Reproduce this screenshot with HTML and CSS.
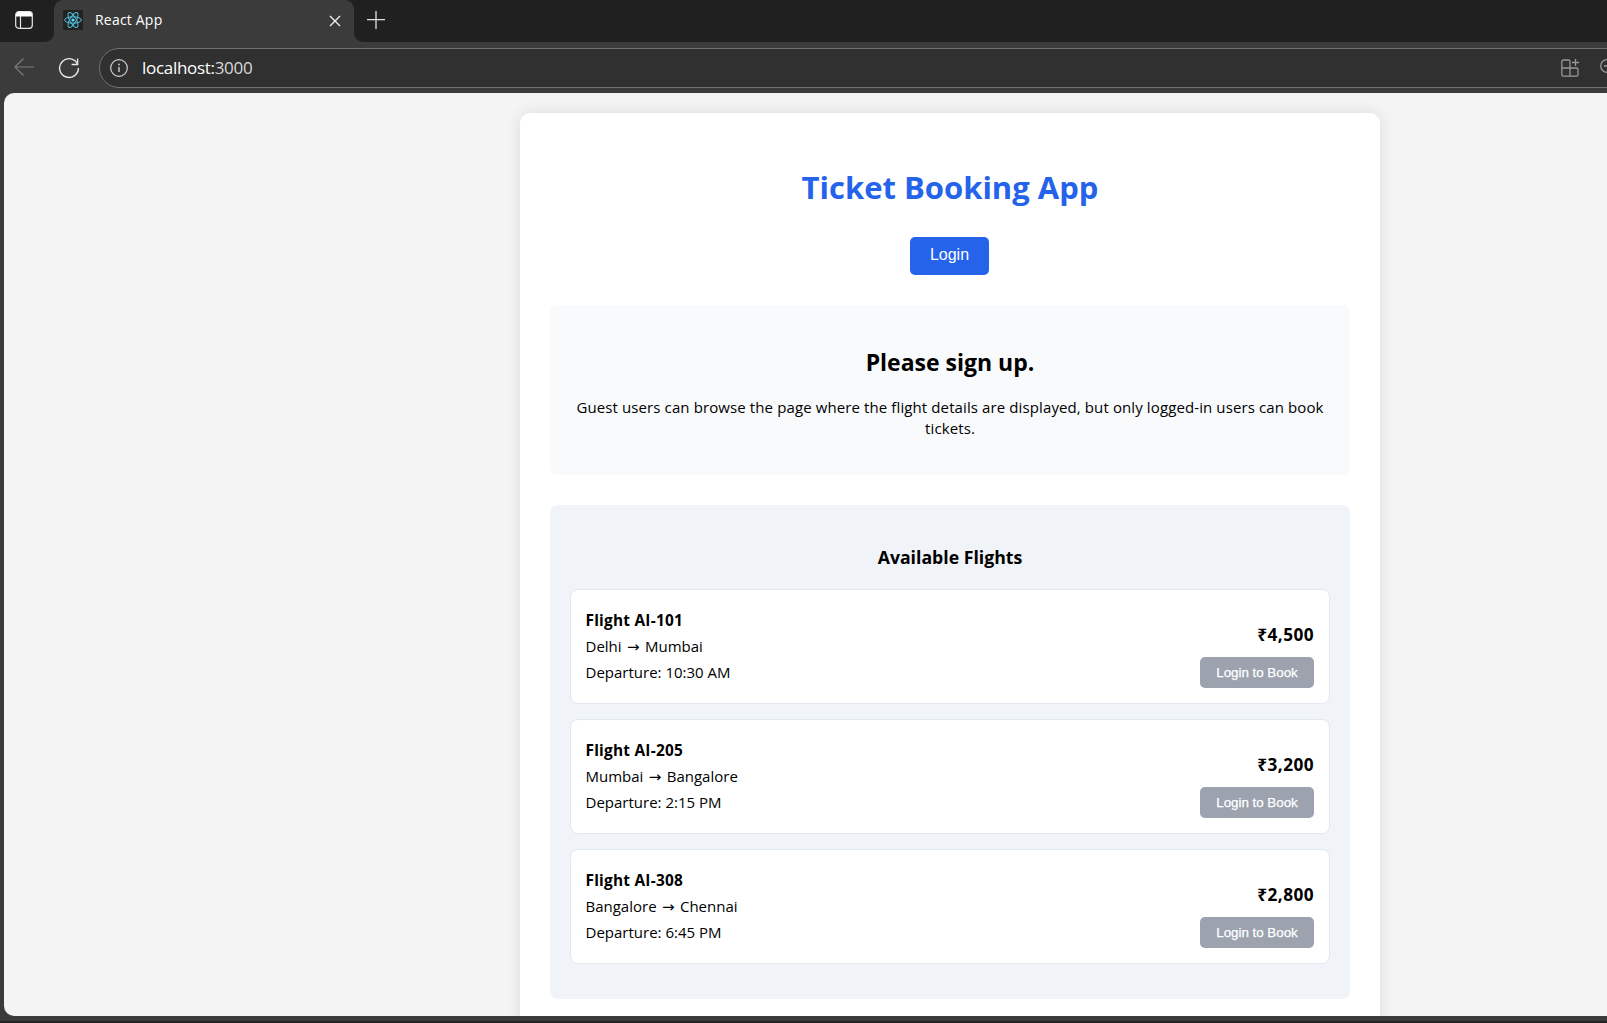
FILE: index.html
```html
<!DOCTYPE html>
<html lang="en">
<head>
<meta charset="utf-8">
<title>React App</title>
<link rel="stylesheet" href="styles.css">
</head>
<body>
<div class="browser">
  <div class="tabstrip">
    <div class="tab-actions">
      <svg width="18" height="18" viewBox="0 0 18 18" fill="none" stroke="#e6e6e6" stroke-width="1.2"><rect x=".7" y=".7" width="16.6" height="16.6" rx="3"/><path d="M1 3.500Q1 1 3.500 1h11Q17 1 17 3.500v2H1z" fill="#fff" stroke="none"/><path d="M5.5 5v12"/></svg>
    </div>
    <div class="tab">
      <svg class="favicon" width="20" height="20" viewBox="0 0 20 20" fill="none" stroke="#53c1de" stroke-width="1"><rect width="20" height="20" rx="1.5" fill="#222" stroke="none"/><ellipse cx="10" cy="10" rx="8.4" ry="3.2"/><ellipse cx="10" cy="10" rx="8.4" ry="3.2" transform="rotate(60 10 10)"/><ellipse cx="10" cy="10" rx="8.4" ry="3.2" transform="rotate(120 10 10)"/><circle cx="10" cy="10" r="1.6" fill="#61dafb" stroke="none"/></svg>
      <span class="tab-title">React App</span>
      <svg class="tab-close" width="12" height="12" viewBox="0 0 12 12" stroke="#f0f0f0" stroke-width="1.4"><path d="M1 1l10 10M11 1L1 11"/></svg>
    </div>
    <div class="strip-rest">
      <svg width="18" height="18" viewBox="0 0 18 18" stroke="#e0e0e0" stroke-width="1.3"><path d="M9 0v18M0 8.7h18"/></svg>
    </div>
  </div>
  <div class="toolbar">
    <svg class="back" width="20" height="18" viewBox="0 0 20 18" fill="none" stroke="#7c7c7c" stroke-width="1.2"><path d="M20 9H1M9.5.5L1 9l8.500 8.500"/></svg>
    <svg class="reload" width="22" height="22" viewBox="0 0 22 22" fill="none" stroke="#e8e8e8" stroke-width="1.4"><path d="M19.700 7.500A9.400 9.400 0 1 0 20.400 11"/><path d="M19.600 1.500v6h-6"/></svg>
    <div class="address">
      <svg width="18" height="18" viewBox="0 0 18 18" fill="none" stroke="#d0d0d0" stroke-width="1.2"><circle cx="9" cy="9" r="8.300"/><path d="M9 8v5" stroke-width="1.400"/><circle cx="9" cy="5.500" r=".9" fill="#d0d0d0" stroke="none"/></svg>
      <span class="url">localhost:<span class="port">3000</span></span>
      <svg class="apps" width="18" height="18" viewBox="0 0 18 18" fill="none" stroke="#999" stroke-width="1.3"><path d="M9 9V2.600Q9 1 7.400 1H2.400Q.8 1 .8 2.600v13Q.8 17.200 2.400 17.200h13Q17 17.200 17 15.600v-5Q17 9 15.400 9H.8M9 9v8.200M14.500 0v7M11 3.500h7"/></svg>
      <svg class="zoom" width="18" height="18" viewBox="0 0 18 18" fill="none" stroke="#999" stroke-width="1.300"><circle cx="7" cy="7" r="6.300"/><path d="M4 7h6M11.500 11.500l6 6"/></svg>
    </div>
  </div>
  <div class="viewport">
    <main class="app">
      <h1 class="title">Ticket Booking App</h1>
      <button class="login">Login</button>
      <section class="notice">
        <h2 class="notice-title">Please sign up.</h2>
        <p class="notice-text">Guest users can browse the page where the flight details are displayed, but only logged-in users can book tickets.</p>
      </section>
      <section class="flights">
        <h3 class="flights-title">Available Flights</h3>
        <article class="flight">
          <div class="info"><p class="code">Flight AI-101</p><p>Delhi <span class="arrow">→</span> Mumbai</p><p>Departure: 10:30 AM</p></div>
          <div class="buy"><p class="price">₹4,500</p><button class="book">Login to Book</button></div>
        </article>
        <article class="flight">
          <div class="info"><p class="code">Flight AI-205</p><p>Mumbai <span class="arrow">→</span> Bangalore</p><p>Departure: 2:15 PM</p></div>
          <div class="buy"><p class="price">₹3,200</p><button class="book">Login to Book</button></div>
        </article>
        <article class="flight">
          <div class="info"><p class="code">Flight AI-308</p><p>Bangalore <span class="arrow">→</span> Chennai</p><p>Departure: 6:45 PM</p></div>
          <div class="buy"><p class="price">₹2,800</p><button class="book">Login to Book</button></div>
        </article>
      </section>
    </main>
  </div>
  <div class="desktop-edge"></div>
</div>
</body>
</html>
```
FILE: styles.css
```css
* { box-sizing: border-box; }
body { margin: 0; overflow: hidden; font-family: "Open Sans", "Noto Sans", sans-serif; color: #000; }
svg { display: block; flex: none; }
p, h1, h2, h3 { margin: 0; }
button { border: 0; padding: 0; color: #fff; font-family: "Liberation Sans", Arial, sans-serif; border-radius: 5px; }

.browser { width: 1607px; height: 1023px; display: flex; flex-direction: column; overflow: hidden; background: #3b3b3b; }

.tabstrip { height: 42px; flex: none; display: flex; background: #3b3b3b; }
.tab-actions { width: 54px; padding: 11px 0 0 15px; background: #202020; border-bottom-right-radius: 9px; }
.tab { width: 300px; display: flex; align-items: flex-start; padding: 10px 13px 0 9px; background: #3b3b3b; position: relative; }
.tab::before, .tab::after { content: ""; position: absolute; top: 0; width: 9px; height: 9px; }
.tab::before { left: 0; background: radial-gradient(circle at 100% 100%, #3b3b3b 8.5px, #202020 9px); }
.tab::after { right: 0; background: radial-gradient(circle at 0 100%, #3b3b3b 8.5px, #202020 9px); }
.tab-title { flex: 1; margin-left: 12px; font-size: 14px; line-height: 19px; letter-spacing: 0.2px; color: #fff; }
.tab-close { margin-top: 5px; }
.strip-rest { flex: 1; padding: 11px 0 0 13px; background: #202020; border-bottom-left-radius: 9px; }

.toolbar { height: 51px; flex: none; display: flex; align-items: flex-start; padding: 6px 0 0 14px; }
.back { margin-top: 10px; }
.reload { margin: 9px 0 0 24px; }
.address { width: 1600px; height: 40px; flex: none; display: flex; align-items: center; margin-left: 19px; padding-left: 10px; border: 1px solid #707070; border-radius: 20px; background: #303030; }
.url { width: 1418px; margin: 0 1px 1px 14px; font-size: 17px; line-height: 24px; letter-spacing: -0.3px; color: #fff; }
.port { color: #d8d8d8; }
.zoom { margin-left: 21px; }

.viewport { flex: 1; min-height: 0; margin-left: 4px; padding: 20px 0 0 516px; overflow: hidden; background: #f4f4f4; border-radius: 10px 0 0 10px; }
.desktop-edge { height: 7px; flex: none; border-top: 5px solid #3b3b3b; background: #222; }

.app { width: 860px; height: 950px; padding: 53px 30px 0; display: flex; flex-direction: column; align-items: center; background: #fff; border-radius: 10px; box-shadow: 0 0 15px rgba(0, 0, 0, 0.1); }
.title { font-size: 31px; line-height: 43px; font-weight: 700; color: #2563eb; }
.login { width: 79px; height: 38px; margin: 28px 1px 30px 0; padding-bottom: 2px; font-size: 16px; background: #2563eb; }

.notice { width: 800px; height: 170px; padding: 41px 20px 0; text-align: center; background: #f9fafc; border-radius: 8px; }
.notice-title { font-size: 23px; line-height: 33px; font-weight: 700; }
.notice-text { margin: 18px -10px 0; padding: 0 10px; font-size: 15px; line-height: 21px; letter-spacing: 0.11px; }

.flights { width: 800px; height: 494px; margin-top: 30px; padding: 40px 20px 0; display: flex; flex-direction: column; background: #f0f4f9; border-radius: 8px; }
.flights-title { margin-bottom: 20px; font-size: 17.7px; line-height: 24px; font-weight: 700; text-align: center; }
.flight { height: 115px; margin-bottom: 15px; padding: 15px 15px 15px 14.5px; display: flex; justify-content: space-between; background: #fff; border: 1px solid #e2e8f0; border-radius: 8px; }
.info { display: flex; flex-direction: column; gap: 5px; padding-top: 5px; font-size: 15px; line-height: 21px; }
.code { font-size: 15.4px; font-weight: 700; letter-spacing: 0.24px; }
.arrow { margin: 0 1.5px; font-family: "DejaVu Sans", sans-serif; font-size: 15px; line-height: 1; }
.buy { display: flex; flex-direction: column; align-items: flex-end; justify-content: flex-end; }
.price { margin-bottom: 10px; font-size: 17.2px; line-height: 24px; letter-spacing: 0.45px; font-weight: 700; }
.book { width: 114px; height: 31px; padding-bottom: 1px; font-size: 13.333px; font-weight: 500; background: #9ca3af; -webkit-text-stroke: 0.25px #fff; }
```
